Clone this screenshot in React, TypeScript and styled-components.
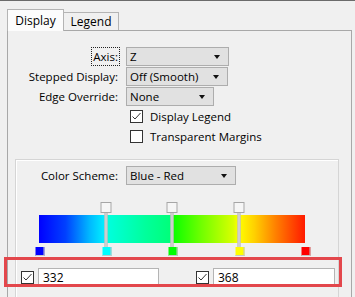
import React from 'react';
import styled, { createGlobalStyle } from 'styled-components';

const GlobalStyle = createGlobalStyle`
  html, body {
    margin: 0;
    padding: 0;
    background: #f0f0f0;
    overflow: hidden;
  }
  body {
    font-family: "Open Sans", "Noto Sans", sans-serif;
    font-size: 11.5px;
    color: #000;
  }
`;

interface Stop {
  pos: number;
  color: string;
  handle: boolean;
}

const stops: Stop[] = [
  { pos: 0, color: '#0000ff', handle: false },
  { pos: 0.25, color: '#00ffff', handle: true },
  { pos: 0.5, color: '#00ff00', handle: true },
  { pos: 0.75, color: '#ffff00', handle: true },
  { pos: 1, color: '#ff0000', handle: false },
];

const CheckMark = () => (
  <svg width="11" height="11" viewBox="0 0 11 11">
    <polyline points="1.5,5.5 4,8 9.5,2" fill="none" stroke="#333" strokeWidth="1" />
  </svg>
);

const Combo: React.FC<{ width: number; value: string }> = ({ width, value }) => (
  <ComboBox width={width}>
    <span>{value}</span>
    <Arrow />
  </ComboBox>
);

const Check: React.FC<{ checked?: boolean }> = ({ checked }) => (
  <CheckBox>{checked && <CheckMark />}</CheckBox>
);

const App: React.FC = () => {
  return (
    <>
      <GlobalStyle />
      <Window>
        <TabBar>
          <Tab active>Display</Tab>
          <Tab>Legend</Tab>
        </TabBar>
        <Panel>
          <Form>
            <Label>
              <Focused>Axis:</Focused>
            </Label>
            <Combo width={103} value="Z" />
            <Label>Stepped Display:</Label>
            <Combo width={102} value="Off (Smooth)" />
            <Label>Edge Override:</Label>
            <Combo width={88} value="None" />
            <CheckRow>
              <Check checked />
              <span>Display Legend</span>
            </CheckRow>
            <CheckRow>
              <Check />
              <span>Transparent Margins</span>
            </CheckRow>
          </Form>
          <GroupBox>
            <SchemeRow>
              <Label>Color Scheme:</Label>
              <Combo width={110} value="Blue - Red" />
            </SchemeRow>
            <Gradient>
              <Bar />
              {stops.map((s) => (
                <Marker key={s.pos} style={{ left: `${s.pos * 100}%` }}>
                  {s.handle ? <Handle /> : <HandleGap />}
                  {s.handle ? <StopLine /> : <LineGap />}
                  <Swatch color={s.color} />
                </Marker>
              ))}
            </Gradient>
            <RangeRow>
              <Field>
                <Check checked />
                <TextInput width={121}>332</TextInput>
              </Field>
              <Field>
                <Check checked />
                <TextInput width={122}>368</TextInput>
              </Field>
              <Highlight />
            </RangeRow>
          </GroupBox>
        </Panel>
      </Window>
    </>
  );
};

export default App;

const Window = styled.div`
  width: 355px;
  height: 297px;
  box-sizing: border-box;
  border-top: 1px solid #6b6b6b;
  padding: 8px 0 0 7px;
  background: #f0f0f0;
  overflow: hidden;
`;

const TabBar = styled.div`
  display: flex;
  align-items: flex-end;
  height: 22px;
`;

const Tab = styled.div<{ active?: boolean }>`
  position: relative;
  z-index: ${({ active }) => (active ? 2 : 1)};
  box-sizing: border-box;
  width: ${({ active }) => (active ? 57 : 56)}px;
  height: ${({ active }) => (active ? 22 : 18)}px;
  margin-left: ${({ active }) => (active ? 0 : -1)}px;
  margin-bottom: ${({ active }) => (active ? 0 : 1)}px;
  border: 1px solid #b4b4b4;
  border-bottom: none;
  background: ${({ active }) => (active ? '#fcfcfc' : '#f0f0f0')};
  display: flex;
  align-items: center;
  justify-content: center;
  padding-bottom: ${({ active }) => (active ? 1 : 0)}px;
  font-size: 12px;
`;

const Panel = styled.div`
  position: relative;
  z-index: 1;
  box-sizing: border-box;
  width: 345px;
  height: 290px;
  margin-top: -1px;
  border: 1px solid #a8a8a8;
  background: #f0f0f0;
`;

const Form = styled.div`
  display: grid;
  grid-template-columns: 110px auto;
  grid-auto-rows: 19px;
  column-gap: 8px;
  row-gap: 1px;
  margin-top: 16px;
`;

const Label = styled.div`
  justify-self: end;
  align-self: center;
  white-space: nowrap;
`;

const Focused = styled.span`
  outline: 1px dotted #222;
  outline-offset: 1px;
`;

const ComboBox = styled.div<{ width: number }>`
  box-sizing: border-box;
  width: ${({ width }) => width}px;
  height: 19px;
  border: 1px solid #adadad;
  background: #e1e1e1;
  display: flex;
  align-items: center;
  justify-content: space-between;
  padding: 0 8px 0 3px;
  white-space: nowrap;
`;

const Arrow = styled.span`
  width: 0;
  height: 0;
  border-left: 3.5px solid transparent;
  border-right: 3.5px solid transparent;
  border-top: 4px solid #111;
`;

const CheckRow = styled.div`
  grid-column: 2;
  display: flex;
  align-items: center;
  gap: 7px;
  padding-left: 4px;
  white-space: nowrap;
`;

const CheckBox = styled.div`
  box-sizing: border-box;
  width: 13px;
  height: 13px;
  flex: 0 0 13px;
  border: 1px solid #333;
  background: #fff;
  display: flex;
  align-items: center;
  justify-content: center;
`;

const GroupBox = styled.div`
  box-sizing: border-box;
  width: 324px;
  height: 200px;
  margin: 13px 0 0 7px;
  padding-top: 6px;
  border: 1px solid #d5d5d5;
  box-shadow: inset 1px 1px 0 #fff;
`;

const SchemeRow = styled.div`
  display: grid;
  grid-template-columns: 102px auto;
  column-gap: 8px;
  height: 19px;
`;

const Gradient = styled.div`
  position: relative;
  width: 266px;
  height: 55px;
  margin: 17px 0 0 23px;
`;

const Bar = styled.div`
  position: absolute;
  top: 13px;
  left: 0;
  right: 0;
  height: 28px;
  background: linear-gradient(
    to right,
    #0000ff 0%,
    #0040ff 10%,
    #00b8ff 19%,
    #00f4ff 25%,
    #00ffe0 25.3%,
    #00ff9c 40%,
    #00ff78 49.8%,
    #08ff00 50.2%,
    #70ff00 61%,
    #d8ff00 73%,
    #ffff00 75%,
    #ffd000 81%,
    #ff8000 89%,
    #ff1a00 100%
  );
`;

const Marker = styled.div`
  position: absolute;
  top: 0;
  width: 11px;
  height: 55px;
  transform: translateX(-50%);
  display: flex;
  flex-direction: column;
  align-items: center;
`;

const Handle = styled.div`
  box-sizing: border-box;
  width: 11px;
  height: 11px;
  flex: 0 0 11px;
  border: 1px solid #a6a6a6;
  background: #f6f6f6;
`;

const HandleGap = styled.div`
  flex: 0 0 11px;
`;

const StopLine = styled.div`
  position: relative;
  z-index: 1;
  box-sizing: border-box;
  width: 3px;
  height: 34px;
  flex: 0 0 34px;
  border-left: 1px solid #a8a8a8;
  border-right: 1px solid #a8a8a8;
  background: #f4f4f4;
`;

const LineGap = styled.div`
  flex: 0 0 34px;
`;

const Swatch = styled.div<{ color: string }>`
  width: 8px;
  height: 8px;
  margin-left: 2px;
  background: ${({ color }) => color};
  border-right: 1px solid #c4c4c4;
  border-bottom: 1px solid #c4c4c4;
`;

const RangeRow = styled.div`
  position: relative;
  display: flex;
  align-items: center;
  gap: 37px;
  height: 30px;
  padding: 10px 0 0 5px;
  box-sizing: border-box;
`;

const Field = styled.div`
  display: flex;
  align-items: center;
  gap: 4px;
`;

const TextInput = styled.div<{ width: number }>`
  box-sizing: border-box;
  width: ${({ width }) => width}px;
  height: 19px;
  border: 1px solid #b4b4b4;
  background: #fff;
  padding-left: 4px;
  display: flex;
  align-items: center;
  font-size: 12px;
`;

const Highlight = styled.div`
  position: absolute;
  top: 0;
  left: -12px;
  width: 338px;
  height: 30px;
  box-sizing: border-box;
  border: 3px solid #e3474c;
  pointer-events: none;
`;
